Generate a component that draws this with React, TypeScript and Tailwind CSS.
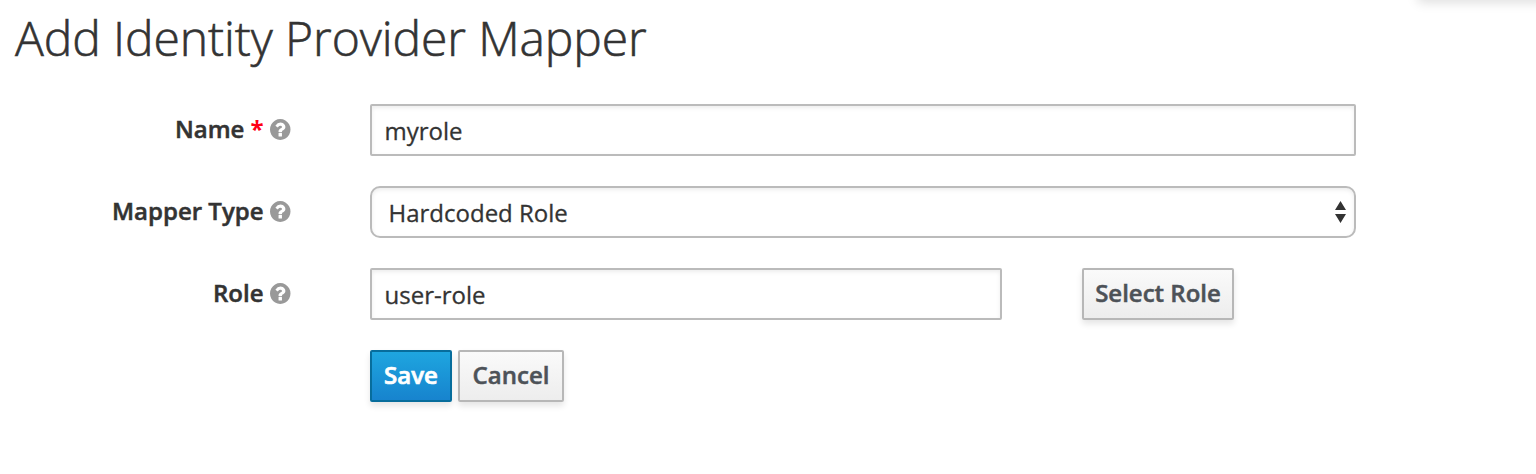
import React from "react";

function Help() {
  return (
    <svg className="ml-[6.500px] h-[21px] w-[20.500px] shrink-0 overflow-visible" viewBox="0 0 1536 1536" preserveAspectRatio="none" fill="#999">
      <path d="M896 1248v-192q0-14-9-23t-23-9h-192q-14 0-23 9t-9 23v192q0 14 9 23t23 9h192q14 0 23-9t9-23zm256-672q0-88-55.500-163t-138.500-116-170-41q-243 0-371 213-15 24 8 42l132 100q7 6 19 6 16 0 25-12 53-68 86-92 34-24 86-24 48 0 85.500 26t37.500 59q0 38-20 61t-68 45q-63 28-115.500 86.500t-52.500 125.500v36q0 14 9 23t23 9h192q14 0 23-9t9-23q0-19 21.500-49.500t54.500-49.500q32-18 49-28.500t46-35 44.500-48 28-60.500 12.500-81zm384 192q0 209-103 385.500t-279.500 279.500-385.500 103-385.500-103-279.500-279.500-103-385.500 103-385.500 279.500-279.500 385.500-103 385.500 103 279.500 279.500 103 385.500z" />
    </svg>
  );
}

function Label({ text, required }: { text: string; required?: boolean }) {
  return (
    <label className="flex h-[52px] w-[290.5px] items-center justify-end pb-px text-[24px] font-semibold whitespace-nowrap text-[#333] [-webkit-text-stroke:0.5px]">
      <span className="pb-px">{text}</span>
      {required && <span className="ml-[6px] pb-px font-bold text-[#ff0014] [-webkit-text-stroke:0px]">*</span>}
      <Help />
    </label>
  );
}

export default function App() {
  return (
    <main className="h-[474px] w-[1536px] overflow-hidden bg-white font-['Open_Sans',sans-serif] text-[24px] text-[#333] [-webkit-text-stroke:0.3px]">
      <div className="absolute top-[-12px] right-[-12px] h-[12px] w-[130px] shadow-[0_2px_12px_rgba(0,0,0,0.15)]" />
      <h1 className="flex h-[104px] items-start pt-[5px] pl-[15px] text-[48px] leading-[66px] font-light tracking-[-0.09px] whitespace-nowrap [-webkit-text-stroke:0.6px]">Add Identity Provider Mapper</h1>
      <form className="flex flex-col gap-[30px]" onSubmit={(e) => e.preventDefault()}>
        <div className="flex gap-[79.5px]">
          <Label text="Name" required />
          <input defaultValue="myrole" className="h-[52px] w-[986px] rounded-[2px] border-2 border-[#bbb] px-[12.500px] shadow-[inset_0_2px_4px_rgba(0,0,0,0.075)]" />
        </div>
        <div className="flex gap-[79.5px]">
          <Label text="Mapper Type" />
          <div className="flex h-[52px] w-[986px] items-center justify-between rounded-[10px] border-2 border-[#bbb] pr-[8px] pl-[16.500px] shadow-[inset_0_2px_4px_rgba(0,0,0,0.075)]">
            <span className="pt-[2px]">Hardcoded Role</span>
            <svg className="h-[22px] w-[11px]" viewBox="0 0 11 22" fill="#333"><path d="M5.500 0L11 9H0zM5.500 22L11 13H0z" /></svg>
          </div>
        </div>
        <div className="flex gap-[79.5px]">
          <Label text="Role" />
          <div className="flex gap-[80px]">
            <input defaultValue="user-role" className="h-[52px] w-[632px] rounded-[2px] border-2 border-[#bbb] px-[12.500px] shadow-[inset_0_2px_4px_rgba(0,0,0,0.075)]" />
            <button className="h-[52px] w-[152px] rounded-[2px] border-2 border-[#b7b7b7] bg-linear-to-b from-[#fafafa] to-[#ededed] pb-[2px] font-semibold whitespace-nowrap text-[#4d5258] shadow-[0_4px_6px_rgba(3,3,3,0.1)] [-webkit-text-stroke:0.5px]">Select Role</button>
          </div>
        </div>
        <div className="flex gap-[6px] pl-[370px]">
          <button className="h-[52px] w-[82px] rounded-[2px] border-2 border-[#076d9c] bg-linear-to-b from-[#1fa7e0] to-[#1782cd] bg-origin-border pb-[2px] font-semibold text-white shadow-[0_4px_6px_rgba(3,3,3,0.1)] [-webkit-text-stroke:0.7px]">Save</button>
          <button className="h-[52px] w-[106px] rounded-[2px] border-2 border-[#b7b7b7] bg-linear-to-b from-[#fafafa] to-[#ededed] pb-[2px] font-semibold text-[#4d5258] shadow-[0_4px_6px_rgba(3,3,3,0.1)] [-webkit-text-stroke:0.5px]">Cancel</button>
        </div>
      </form>
    </main>
  );
}
